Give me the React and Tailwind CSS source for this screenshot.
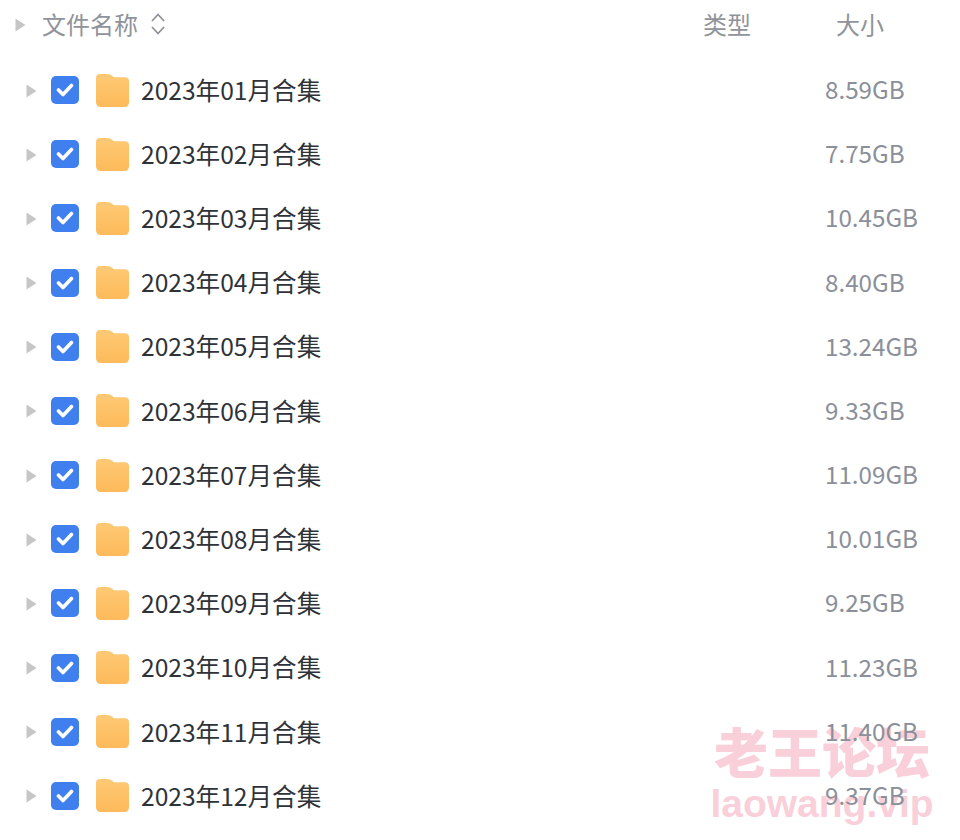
import React from 'react';

const CJK = "font-['Noto_Sans_CJK_SC','Liberation_Sans',sans-serif]";

const ROWS = [
    { name: '2023年01月合集', size: '8.59GB' },
    { name: '2023年02月合集', size: '7.75GB' },
    { name: '2023年03月合集', size: '10.45GB' },
    { name: '2023年04月合集', size: '8.40GB' },
    { name: '2023年05月合集', size: '13.24GB' },
    { name: '2023年06月合集', size: '9.33GB' },
    { name: '2023年07月合集', size: '11.09GB' },
    { name: '2023年08月合集', size: '10.01GB' },
    { name: '2023年09月合集', size: '9.25GB' },
    { name: '2023年10月合集', size: '11.23GB' },
    { name: '2023年11月合集', size: '11.40GB' },
    { name: '2023年12月合集', size: '9.37GB' },
];

const Caret = () => (
    <svg width="11" height="14" viewBox="0 0 11 14" className="shrink-0 mt-[1px]">
        <path d="M0.5 0.5 L10.5 7 L0.5 13.5 Z" fill="#c6c6c6" />
    </svg>
);

const Checkbox = () => (
    <div className="w-[28px] h-[28px] rounded-[5px] bg-[#3f80ee] flex items-center justify-center shrink-0">
        <svg width="18" height="14" viewBox="0 0 18 14">
            <path d="M2.5 7 L7 11.5 L15.5 2.5" fill="none" stroke="#fff" strokeWidth="3.6" strokeLinecap="round" strokeLinejoin="round" />
        </svg>
    </div>
);

const Folder = () => (
    <svg width="33" height="33" viewBox="0 0 33 33" className="shrink-0">
        <defs>
            <linearGradient id="folderFill" x1="0" y1="0" x2="0" y2="1">
                <stop offset="0" stopColor="#fec975" />
                <stop offset="1" stopColor="#fdba5a" />
            </linearGradient>
        </defs>
        <path d="M0 4 Q0 0 4 0 L11 0 Q13.5 0 15.5 1.2 L18 3.2 L29 3.2 Q33 3.2 33 7.2 L33 28 Q33 33 28 33 L5 33 Q0 33 0 28 Z" fill="url(#folderFill)" />
    </svg>
);

const Row = ({ name, size }) => (
    <div className="h-[64.18px] flex items-center">
        <div className="ml-[26px] w-[25px] flex"><Caret /></div>
        <Checkbox />
        <div className="ml-[17px] flex"><Folder /></div>
        <span className="ml-[12px] pb-[2px] text-[24.6px] leading-none text-[#2f3339] whitespace-nowrap">{name}</span>
        <span className="ml-auto w-[135px] pb-[2px] text-[24.2px] leading-none text-[#8a8f99] whitespace-nowrap">{size}</span>
    </div>
);

const App = () => {
    return (
        <div className={`relative w-[960px] h-[840px] bg-white overflow-hidden ${CJK}`}>
            {/* watermark */}
            <div className="absolute left-[708px] top-[720px] w-[228px] flex flex-col items-center text-[#f9d0d9]">
                <span className="text-[54px] leading-[62px] font-black whitespace-nowrap">老王论坛</span>
                <span className="text-[39px] leading-[44px] font-bold whitespace-nowrap font-['Liberation_Sans',sans-serif]">laowang.vip</span>
            </div>

            <div className="relative">
                <div className="h-[48px] flex items-center text-[#8f939b] text-[24px] leading-none">
                    <div className="ml-[15px] w-[27px] flex"><Caret /></div>
                    <span>文件名称</span>
                    <svg width="16" height="24" viewBox="0 0 16 24" className="ml-[12px]">
                        <path d="M2 9 L8 2.5 L14 9 M2 15 L8 21.5 L14 15" fill="none" stroke="#8f939b" strokeWidth="1.8" />
                    </svg>
                    <span className="ml-auto w-[133px]">类型</span>
                    <span className="w-[124px]">大小</span>
                </div>
                <div className="mt-[10px]">
                    {ROWS.map((row) => (
                        <Row key={row.name} name={row.name} size={row.size} />
                    ))}
                </div>
            </div>
        </div>
    );
};

export default App;
